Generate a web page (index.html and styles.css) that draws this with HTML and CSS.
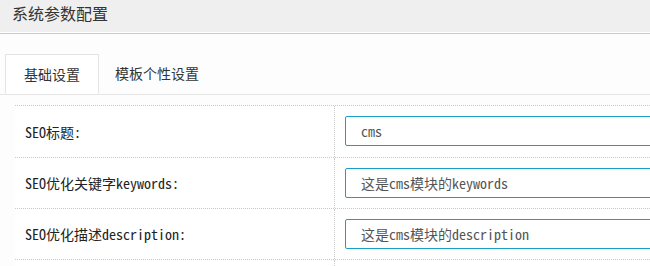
FILE: index.html
```html
<!DOCTYPE html>
<html lang="zh-CN">
<head>
    <meta charset="UTF-8">
    <meta name="viewport" content="width=device-width, initial-scale=1.0">
    <title>系统参数配置</title>
    <link rel="stylesheet" href="styles.css">
</head>
<body>
    <div class="page-header">
        <h2>系统参数配置</h2>
    </div>

    <div class="content">
        <ul class="tabs">
            <li class="tab active">基础设置</li>
            <li class="tab">模板个性设置</li>
        </ul>

        <div class="form-table">
            <div class="form-row first">
                <div class="form-label">SEO标题:</div>
                <div class="form-field"><input type="text" class="text-input" value="cms"></div>
            </div>
            <div class="form-row">
                <div class="form-label">SEO优化关键字keywords:</div>
                <div class="form-field"><input type="text" class="text-input" value="这是cms模块的keywords"></div>
            </div>
            <div class="form-row">
                <div class="form-label">SEO优化描述description:</div>
                <div class="form-field"><input type="text" class="text-input" value="这是cms模块的description"></div>
            </div>
            <div class="form-row">
                <div class="form-label"></div>
                <div class="form-field"></div>
            </div>
        </div>
    </div>
</body>
</html>
```

FILE: styles.css
```css
/* Reset */
* {
    margin: 0;
    padding: 0;
    box-sizing: border-box;
}

html, body {
    overflow: hidden;
}

body {
    background: #fdfdfd;
    color: #333;
    font-family: "Noto Sans CJK SC", "Noto Sans", sans-serif;
}

/* Page title bar */
.page-header {
    height: 34px;
    background: #efefef;
    border-bottom: 1px solid #c9c9c9;
    box-shadow: inset 0 -1px 0 #fff;
}

.page-header h2 {
    font-size: 16px;
    font-weight: normal;
    line-height: 26px;
    padding-left: 12px;
    color: #333;
}

/* Tabs */
.tabs {
    list-style: none;
    display: flex;
    padding: 20px 0 0 5px;
    border-bottom: 1px solid #e4e4e4;
}

.tab {
    height: 40px;
    line-height: 38px;
    padding: 0 16px;
    font-size: 14px;
    color: #333;
    cursor: pointer;
}

.tab.active {
    padding: 0 18px;
    background: #fff;
    border: 1px solid #e4e4e4;
    border-bottom-color: #fff;
    margin-bottom: -1px;
}

/* Form table */
.form-table {
    margin: 10px 0 0 15px;
    background: #fff;
    font-family: "Noto Sans Mono CJK SC", "SimSun", "Liberation Mono", monospace;
    font-size: 14px;
}

.form-row {
    display: grid;
    grid-template-columns: 320px 1fr;
    min-height: 51px;
    border-top: 1px dotted #c8c8c8;
}

.form-row.first {
    min-height: 52px;
}

.form-label {
    display: flex;
    align-items: center;
    padding-left: 10px;
    border-right: 1px dotted #c8c8c8;
    color: #222;
}

.form-field {
    padding: 10px;
}

.text-input {
    display: block;
    width: 420px;
    height: 30px;
    padding: 0 15px;
    border: 1px solid #1a9fc4;
    border-radius: 2px;
    background: #fff;
    font-family: inherit;
    font-size: 14px;
    color: #555;
    outline: none;
}
```
